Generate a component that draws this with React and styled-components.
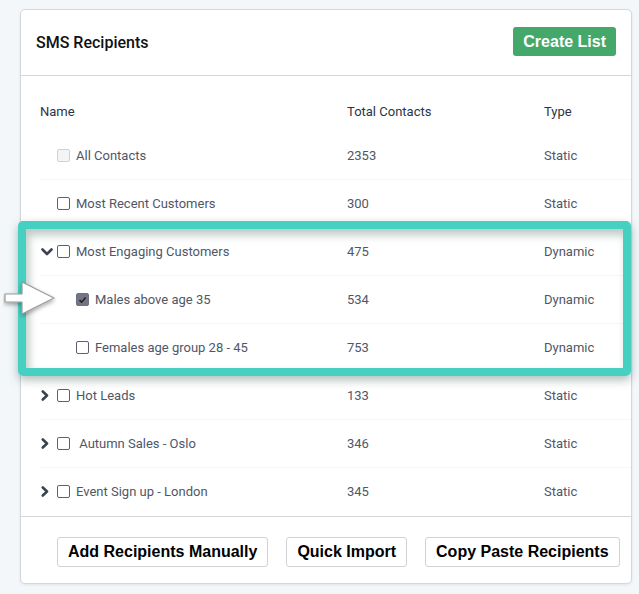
import styled, { createGlobalStyle } from 'styled-components';

const GlobalStyle = createGlobalStyle`
  body {
    margin: 0;
    background: #f4f7fa;
    font-family: Roboto, "Liberation Sans", Arial, sans-serif;
  }
`;

const lists = [
  { name: 'All Contacts', total: 2353, type: 'Static', disabled: true },
  { name: 'Most Recent Customers', total: 300, type: 'Static' },
  { name: 'Most Engaging Customers', total: 475, type: 'Dynamic', expander: 'down' },
  { name: 'Males above age 35', total: 534, type: 'Dynamic', child: true, checked: true },
  { name: 'Females age group 28 - 45', total: 753, type: 'Dynamic', child: true },
  { name: 'Hot Leads', total: 133, type: 'Static', expander: 'right' },
  { name: '\u00a0Autumn Sales - Oslo', total: 346, type: 'Static', expander: 'right' },
  { name: 'Event Sign up - London', total: 345, type: 'Static', expander: 'right' },
];

const Chevron = ({ dir }) =>
  dir === 'down' ? (
    <svg width="12" height="8" viewBox="0 0 12 8">
      <polyline points="1.5,1.5 6,6 10.5,1.5" fill="none" stroke="#3b4250" strokeWidth="2.6" strokeLinecap="round" strokeLinejoin="round" />
    </svg>
  ) : (
    <svg width="8" height="11" viewBox="0 0 8 11">
      <polyline points="1.8,1.5 6,5.5 1.8,9.5" fill="none" stroke="#3b4250" strokeWidth="2.6" strokeLinecap="round" strokeLinejoin="round" />
    </svg>
  );

function App() {
  return (
    <Page>
      <GlobalStyle />
      <Card>
        <CardHeader>
          <Title>SMS Recipients</Title>
          <CreateButton>Create List</CreateButton>
        </CardHeader>

        <Table>
          <HeaderRow>
            <div>Name</div>
            <div>Total Contacts</div>
            <div>Type</div>
          </HeaderRow>
          {lists.map((l) => (
            <Row key={l.name}>
              <NameCell child={l.child}>
                <Expander>{l.expander && <Chevron dir={l.expander} />}</Expander>
                <Check checked={l.checked} disabled={l.disabled}>
                  {l.checked && (
                    <svg width="9" height="8" viewBox="0 0 9 8">
                      <polyline points="1.5,4.2 3.6,6.2 7.6,1.4" fill="none" stroke="#2a1b24" strokeWidth="1.6" />
                    </svg>
                  )}
                </Check>
                <span>{l.name}</span>
              </NameCell>
              <div>{l.total}</div>
              <div>{l.type}</div>
            </Row>
          ))}
        </Table>

        <Footer>
          <ActionButton>Add Recipients Manually</ActionButton>
          <ActionButton>Quick Import</ActionButton>
          <ActionButton>Copy Paste Recipients</ActionButton>
        </Footer>

        <Highlight />
        <Arrow>
          <svg width="54" height="40" viewBox="0 0 54 40">
            <defs>
              <filter id="sh" x="-20%" y="-20%" width="140%" height="160%">
                <feDropShadow dx="0" dy="2" stdDeviation="2" floodColor="#000" floodOpacity="0.35" />
              </filter>
            </defs>
            <polygon
              points="2,14 19,14 19,2 51,18 19,34 19,22 2,22"
              fill="#ffffff"
              stroke="#9a9a9a"
              strokeWidth="1.2"
              strokeLinejoin="round"
              filter="url(#sh)"
            />
          </svg>
        </Arrow>
      </Card>
    </Page>
  );
}

export default App;

const Page = styled.div`
  padding: 9px 7px 10px 20px;
`;

const Card = styled.div`
  position: relative;
  width: 612px;
  box-sizing: border-box;
  background: #fff;
  border: 1px solid #d4d8dd;
  border-radius: 5px;
  box-shadow: 0 1px 3px rgba(0, 0, 0, 0.08);
`;

const CardHeader = styled.div`
  display: flex;
  align-items: center;
  justify-content: space-between;
  height: 65px;
  padding: 0 15px;
  border-bottom: 1px solid #d4d8dd;
`;

const Title = styled.div`
  font-size: 16px;
  font-weight: 500;
  color: #111;
  margin-top: -1px;
`;

const CreateButton = styled.button`
  height: 29px;
  padding: 0 10px;
  border: none;
  border-radius: 3px;
  background: #45a86b;
  color: #fff;
  font-family: "Liberation Sans", Arial, sans-serif;
  font-weight: bold;
  font-size: 16px;
  margin-top: -2px;
  white-space: nowrap;
`;

const Table = styled.div`
  padding-left: 19px;
  padding-top: 1px;
  font-size: 13px;
  color: #4f5767;
`;

const HeaderRow = styled.div`
  display: grid;
  grid-template-columns: 307px 197px 1fr;
  align-items: center;
  height: 40px;
  margin-top: 14px;
  margin-bottom: 1px;
  color: #2b3446;
`;

const Row = styled.div`
  display: grid;
  grid-template-columns: 307px 197px 1fr;
  align-items: center;
  height: 48px;
  box-sizing: border-box;
  border-bottom: 1px solid #f6f7f9;

  &:last-child {
    border-bottom: none;
    height: 47px;
  }
`;

const NameCell = styled.div`
  display: flex;
  align-items: center;
  padding-left: ${({ child }) => (child ? '19px' : '0')};
`;

const Expander = styled.span`
  display: flex;
  align-items: center;
  width: 17px;
  height: 12px;
  padding-left: 1px;
  box-sizing: border-box;
`;

const Check = styled.span`
  display: inline-flex;
  align-items: center;
  justify-content: center;
  box-sizing: border-box;
  width: 13px;
  height: 13px;
  margin-right: 6px;
  border: 1px solid ${({ disabled, checked }) => (disabled ? '#cfd3d8' : checked ? '#6d7080' : '#5c616d')};
  border-radius: 2px;
  background: ${({ disabled, checked }) => (disabled ? '#f3f4f6' : checked ? '#727584' : '#fff')};
`;

const Footer = styled.div`
  display: flex;
  gap: 18px;
  padding: 20px 0 16px 36px;
  border-top: 1px solid #d4d8dd;
  margin-top: 1px;
`;

const ActionButton = styled.button`
  flex-shrink: 0;
  height: 30px;
  padding: 0 10px;
  background: #fff;
  border: 1px solid #cfd3d8;
  border-radius: 3px;
  color: #000;
  font-family: "Liberation Sans", Arial, sans-serif;
  font-weight: bold;
  font-size: 16px;
  white-space: nowrap;
`;

const Highlight = styled.div`
  position: absolute;
  left: -3px;
  top: 211px;
  width: 613px;
  height: 155px;
  box-sizing: border-box;
  border: 8px solid #45d0c2;
  border-radius: 5px;
  pointer-events: none;
  box-shadow: 0 4px 10px rgba(20, 70, 60, 0.35), inset 3px 6px 8px rgba(60, 100, 90, 0.35);
`;

const Arrow = styled.div`
  position: absolute;
  left: -18px;
  top: 270px;
  line-height: 0;
`;
